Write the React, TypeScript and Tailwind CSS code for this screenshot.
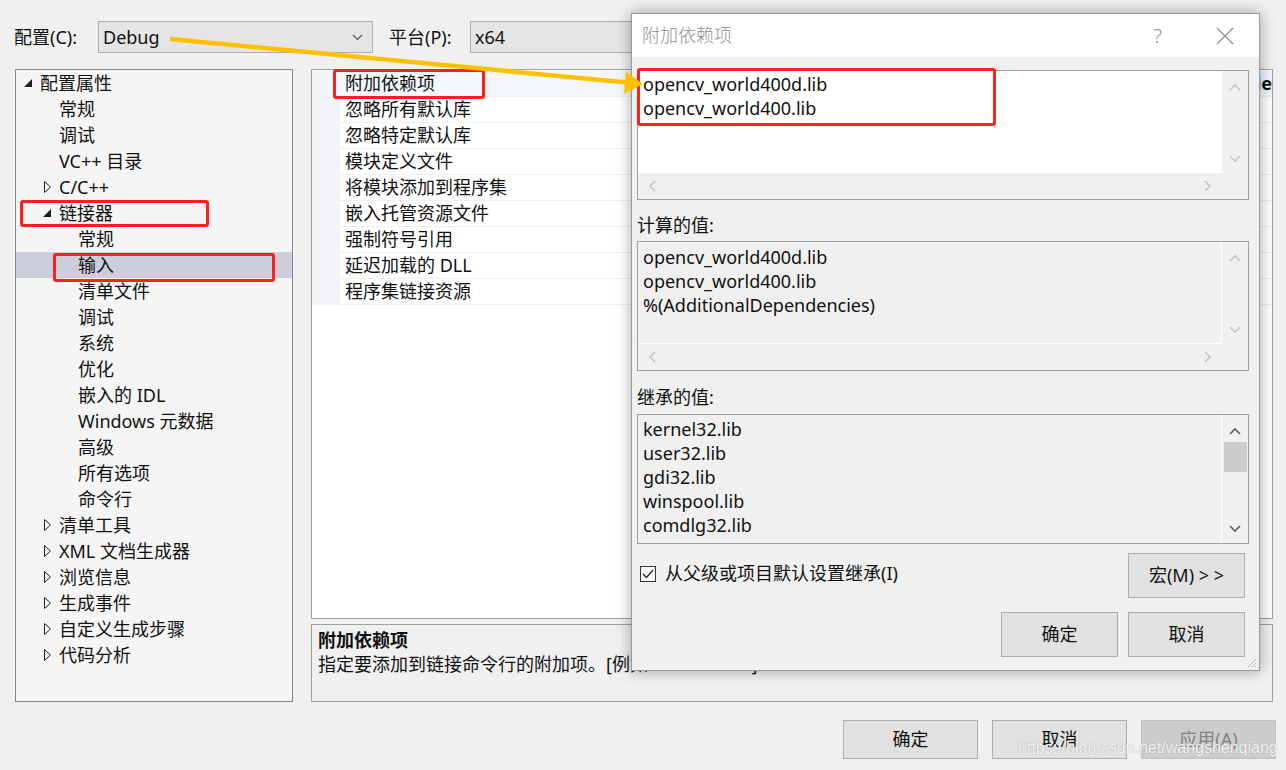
import React from "react";

type TreeNode = {
  label: string;
  level: 0 | 1 | 2;
  arrow?: "open" | "closed";
  selected?: boolean;
};

const tree: TreeNode[] = [
  { label: "配置属性", level: 0, arrow: "open" },
  { label: "常规", level: 1 },
  { label: "调试", level: 1 },
  { label: "VC++ 目录", level: 1 },
  { label: "C/C++", level: 1, arrow: "closed" },
  { label: "链接器", level: 1, arrow: "open" },
  { label: "常规", level: 2 },
  { label: "输入", level: 2, selected: true },
  { label: "清单文件", level: 2 },
  { label: "调试", level: 2 },
  { label: "系统", level: 2 },
  { label: "优化", level: 2 },
  { label: "嵌入的 IDL", level: 2 },
  { label: "Windows 元数据", level: 2 },
  { label: "高级", level: 2 },
  { label: "所有选项", level: 2 },
  { label: "命令行", level: 2 },
  { label: "清单工具", level: 1, arrow: "closed" },
  { label: "XML 文档生成器", level: 1, arrow: "closed" },
  { label: "浏览信息", level: 1, arrow: "closed" },
  { label: "生成事件", level: 1, arrow: "closed" },
  { label: "自定义生成步骤", level: 1, arrow: "closed" },
  { label: "代码分析", level: 1, arrow: "closed" },
];

const props = [
  "附加依赖项",
  "忽略所有默认库",
  "忽略特定默认库",
  "模块定义文件",
  "将模块添加到程序集",
  "嵌入托管资源文件",
  "强制符号引用",
  "延迟加载的 DLL",
  "程序集链接资源",
];

const indent = { 0: "pl-[5px]", 1: "pl-[24px]", 2: "pl-[43px]" };

const Arrow = ({ kind }: { kind?: "open" | "closed" }) => {
  if (kind === "open")
    return (
      <svg width="10" height="10" viewBox="0 0 10 10" className="ml-[2px]">
        <polygon points="9,1 9,9 1,9" fill="#1e1e1e" />
      </svg>
    );
  if (kind === "closed")
    return (
      <svg width="8" height="12" viewBox="0 0 8 12" className="ml-[4px]">
        <polygon points="0.5,0.5 6.5,6 0.5,11.5" fill="none" stroke="#1e1e1e" strokeWidth="1" />
      </svg>
    );
  return null;
};

const Chevron = ({ dir, color }: { dir: "up" | "down" | "left" | "right"; color: string }) => {
  const pts = {
    up: "1,7 6,2 11,7",
    down: "1,2 6,7 11,2",
    left: "7,1 2,6 7,11",
    right: "2,1 7,6 2,11",
  }[dir];
  const vertical = dir === "up" || dir === "down";
  return (
    <svg
      width={vertical ? 12 : 9}
      height={vertical ? 9 : 12}
      viewBox={vertical ? "0 0 12 9" : "0 0 9 12"}
    >
      <polyline points={pts} fill="none" stroke={color} strokeWidth="1.6" />
    </svg>
  );
};

const Combo = ({ value }: { value: string }) => (
  <div className="flex items-center justify-between w-[275px] h-[32px] border border-[#adadad] bg-[#e5e5e5] pl-[4px] pr-[9px]">
    <span className="text-[18px]">{value}</span>
    <svg width="11" height="7" viewBox="0 0 11 7">
      <polyline points="1,1 5.5,5.5 10,1" fill="none" stroke="#555" strokeWidth="1.2" />
    </svg>
  </div>
);

const Button = ({ label, disabled }: { label: string; disabled?: boolean }) => (
  <div
    className={
      disabled
        ? "flex items-center justify-center w-[135px] h-[39px] border border-[#bfbfbf] bg-[#cccccc] text-[#838383] text-[18px]"
        : "flex items-center justify-center w-[135px] h-[39px] border border-[#adadad] bg-[#e1e1e1] text-[18px]"
    }
  >
    {label}
  </div>
);

const DlgButton = ({ label }: { label: string }) => (
  <div className="flex items-center justify-center w-[117px] h-[45px] border border-[#adadad] bg-[#e1e1e1] text-[18px]">
    {label}
  </div>
);

const ValueBox = ({
  lines,
  white,
  hscroll,
  thumb,
  pt,
}: {
  lines: string[];
  white?: boolean;
  hscroll?: boolean;
  thumb?: boolean;
  pt: string;
}) => {
  const arrowColor = thumb ? "#606060" : "#c4c4c4";
  return (
    <div className="w-[612px] h-[130px] border border-[#a0a0a0] bg-[#f0f0f0] flex flex-col">
      <div className="flex flex-1 min-h-0">
        <div
          className={
            (white ? "bg-white " : "bg-[#f0f0f0] border-r border-white " + (hscroll ? "border-b " : "")) +
            "flex-1 pl-[5px] leading-[24px] text-[18px] " +
            pt
          }
        >
          {lines.map((l) => (
            <div key={l}>{l}</div>
          ))}
        </div>
        <div className="w-[26px] flex flex-col items-center pt-[12px] pb-[10px]">
          <Chevron dir="up" color={arrowColor} />
          {thumb ? (
            <div className="w-[23px] h-[30px] bg-[#cdcdcd] mt-[6px]" />
          ) : null}
          <div className="flex-1" />
          <Chevron dir="down" color={arrowColor} />
        </div>
      </div>
      {hscroll ? (
        <div className="h-[26px] flex items-center">
          <div className="w-[584px] flex items-center justify-between px-[10px]">
            <Chevron dir="left" color="#c4c4c4" />
            <Chevron dir="right" color="#c4c4c4" />
          </div>
        </div>
      ) : null}
    </div>
  );
};

export default function App() {
  return (
    <div className="relative w-[1286px] h-[770px] overflow-hidden bg-[#f0f0f0] text-[#111] [font-family:'Noto_Sans','Noto_Sans_CJK_SC',sans-serif]">
      {/* top: configuration / platform */}
      <div className="flex items-center pt-[21px] pl-[14px]">
        <span className="w-[84px] text-[18px]">配置(C):</span>
        <Combo value="Debug" />
        <span className="w-[81px] ml-[16px] text-[18px]">平台(P):</span>
        <Combo value="x64" />
      </div>

      {/* main body */}
      <div className="flex mt-[16px] pl-[15px]">
        <div className="w-[278px] h-[633px] border border-[#828790] bg-[#f5f5f5]">
          {tree.map((n, i) => (
            <div
              key={i}
              className={
                "flex items-center h-[26px] text-[18px] " +
                indent[n.level] +
                (n.selected ? " bg-[#cccedb]" : "")
              }
            >
              <div className="w-[19px] flex items-center">
                <Arrow kind={n.arrow} />
              </div>
              <span>{n.label}</span>
            </div>
          ))}
        </div>

        <div className="ml-[18px] flex flex-col w-[962px]">
          <div className="h-[550px] border border-[#a0a0a0] bg-white pt-[1px]">
            {props.map((p, i) => (
              <div key={p} className="flex h-[26px]">
                <div className="w-[28px] bg-[#f3f5f9]" />
                <div
                  className={
                    "flex flex-1 items-center border-b border-[#efefef] " +
                    (i === 0 ? "bg-[#f3f6fb]" : "")
                  }
                >
                  <span className="pl-[5px] text-[18px] w-[600px]">{p}</span>
                  <span className="flex-1 text-right font-bold text-[18px] overflow-hidden">
                    {i === 0 ? "de" : ""}
                  </span>
                </div>
              </div>
            ))}
          </div>
          <div className="mt-[5px] h-[78px] border border-[#a0a0a0] bg-[#f0f0f0] pl-[6px] pt-[3px] leading-[24px] text-[18px]">
            <div className="font-bold">附加依赖项</div>
            <div>指定要添加到链接命令行的附加项。[例如 kernel32.lib]</div>
          </div>
        </div>
      </div>

      {/* bottom buttons */}
      <div className="flex justify-end gap-[14px] mt-[18px] pr-[10px]">
        <Button label="确定" />
        <Button label="取消" />
        <Button label="应用(A)" disabled />
      </div>

      <div className="absolute left-[1018px] top-[736px] text-[16px] text-white/90 [font-family:'Liberation_Sans',sans-serif] [text-shadow:0_0_1px_#8a8a8a]">
        https://blog.csdn.net/wangshenqiang
      </div>

      {/* dialog */}
      <div className="absolute left-[631px] top-[13px] w-[629px] h-[658px] border border-[#9a9a9a] bg-[#f0f0f0] shadow-[0_0_14px_rgba(0,0,0,0.35)] flex flex-col">
        <div className="h-[43px] bg-white flex items-center pl-[10px] text-[#8f8f8f]">
          <span className="text-[18px] font-light">附加依赖项</span>
          <span className="ml-auto text-[20px] font-light mr-[54px]">?</span>
          <svg width="18" height="18" viewBox="0 0 18 18" className="mr-[25px]">
            <path d="M1 1 L17 17 M17 1 L1 17" stroke="#8f8f8f" strokeWidth="1.2" />
          </svg>
        </div>
        <div className="flex flex-col pl-[5px] pt-[13px]">
          <ValueBox lines={["opencv_world400d.lib", "opencv_world400.lib"]} white hscroll pt="pt-[1px]" />
          <div className="mt-[12px] h-[26px] flex items-center text-[18px]">计算的值:</div>
          <div className="mt-[3px]">
            <ValueBox
              lines={["opencv_world400d.lib", "opencv_world400.lib", "%(AdditionalDependencies)"]}
              hscroll
              pt="pt-[3px]"
            />
          </div>
          <div className="mt-[13px] h-[26px] flex items-center text-[18px]">继承的值:</div>
          <div className="mt-[4px]">
            <ValueBox
              lines={["kernel32.lib", "user32.lib", "gdi32.lib", "winspool.lib", "comdlg32.lib"]}
              thumb
              pt="pt-[2px]"
            />
          </div>
          <div className="w-[612px] flex justify-between items-start mt-[9px]">
            <div className="flex items-center mt-[7px] ml-[3px]">
              <div className="w-[16px] h-[16px] border border-[#333] bg-white flex items-center justify-center">
                <svg width="12" height="10" viewBox="0 0 12 10">
                  <polyline points="1,5 4.5,8.5 11,1" fill="none" stroke="#222" strokeWidth="1.3" />
                </svg>
              </div>
              <span className="ml-[9px] text-[18px]">从父级或项目默认设置继承(I)</span>
            </div>
            <div className="mr-[4px]">
              <DlgButton label="宏(M) > >" />
            </div>
          </div>
          <div className="w-[612px] flex justify-end gap-[10px] mt-[14px]">
            <DlgButton label="确定" />
            <div className="mr-[4px]">
              <DlgButton label="取消" />
            </div>
          </div>
        </div>
        <svg width="12" height="12" viewBox="0 0 12 12" className="absolute right-[2px] bottom-[2px]">
          <path d="M11 3 L3 11 M11 7 L7 11 M11 10 L10 11" stroke="#b5b5b5" strokeWidth="1" />
        </svg>
      </div>

      {/* annotations */}
      <div className="absolute left-[20px] top-[200px] w-[189px] h-[27px] border-[3px] border-[#ff1f1f] rounded-[3px]" />
      <div className="absolute left-[53px] top-[253px] w-[222px] h-[29px] border-[3px] border-[#ff1f1f] rounded-[3px]" />
      <div className="absolute left-[333px] top-[69px] w-[152px] h-[30px] border-[3px] border-[#ff1f1f] rounded-[3px]" />
      <div className="absolute left-[637px] top-[68px] w-[359px] h-[58px] border-[3px] border-[#ff1f1f] rounded-[3px]" />
      <svg width="1286" height="770" className="absolute left-0 top-0 pointer-events-none">
        <line x1="170" y1="39" x2="627" y2="82.5" stroke="#ffc000" strokeWidth="4.5" />
        <polygon points="643,84 626,71.5 624,94" fill="#ffc000" />
      </svg>
    </div>
  );
}
